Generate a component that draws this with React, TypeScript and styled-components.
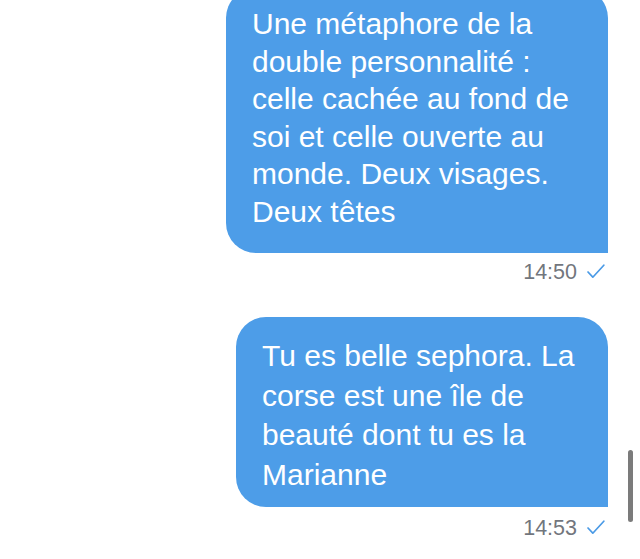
import * as React from 'react';
import styled, { createGlobalStyle } from 'styled-components';

const GlobalStyle = createGlobalStyle`
  html, body {
    margin: 0;
    padding: 0;
    background: #fff;
    overflow: hidden;
  }
  body {
    font-family: 'Liberation Sans', Arial, sans-serif;
  }
`;

const Screen = styled.div`
  position: relative;
  width: 640px;
  height: 559px;
  overflow: hidden;
  background: #fff;
`;

const Thread = styled.div`
  display: flex;
  flex-direction: column;
  align-items: flex-end;
  padding-right: 32px;
  margin-top: -12px;
`;

const Group = styled.div<{ $gap: number }>`
  display: flex;
  flex-direction: column;
  align-items: flex-end;
  margin-top: ${p => p.$gap}px;
`;

const Bubble = styled.div<{ $width: number; $leading: number; $padTop: number; $padBottom: number }>`
  box-sizing: border-box;
  width: ${p => p.$width}px;
  background: #4d9de8;
  color: #fff;
  font-size: 30px;
  line-height: ${p => p.$leading}px;
  padding: ${p => p.$padTop}px 20px ${p => p.$padBottom}px 26px;
  border-radius: 30px 30px 0 30px;
  white-space: nowrap;
`;

const Line = styled.span`
  display: block;
`;

const Meta = styled.div<{ $top: number }>`
  display: flex;
  align-items: center;
  gap: 10px;
  margin-top: ${p => p.$top}px;
  margin-right: 3px;
  height: 26px;
  font-size: 21.5px;
  line-height: 26px;
  color: #72767d;
`;

const Check = styled.svg`
  width: 18px;
  height: 15px;
  margin-top: -1px;
`;

const ScrollThumb = styled.div`
  position: absolute;
  top: 450px;
  right: 7px;
  width: 5px;
  height: 72px;
  border-radius: 3px;
  background: #7b7b7b;
`;

const messages = [
  {
    gap: 0,
    width: 382,
    leading: 37.5,
    padTop: 17,
    padBottom: 23,
    metaTop: 6,
    time: '14:50',
    lines: [
      'Une métaphore de la',
      'double personnalité :',
      'celle cachée au fond de',
      'soi et celle ouverte au',
      'monde. Deux visages.',
      'Deux têtes',
    ],
  },
  {
    gap: 32,
    width: 372,
    leading: 39.5,
    padTop: 19,
    padBottom: 13,
    metaTop: 8,
    time: '14:53',
    lines: [
      'Tu es belle sephora. La',
      'corse est une île de',
      'beauté dont tu es la',
      'Marianne',
    ],
  },
];

function ReadCheck() {
  return (
    <Check viewBox="0 0 18 15" fill="none">
      <path
        d="M1 8 L5.8 13.2 L16.8 1.2"
        stroke="#4a9ae6"
        strokeWidth="1.7"
        strokeLinecap="round"
        strokeLinejoin="round"
      />
    </Check>
  );
}

export default function App() {
  return (
    <Screen>
      <GlobalStyle />
      <Thread>
        {messages.map(m => (
          <Group key={m.time} $gap={m.gap}>
            <Bubble
              $width={m.width}
              $leading={m.leading}
              $padTop={m.padTop}
              $padBottom={m.padBottom}
            >
              {m.lines.map(l => (
                <Line key={l}>{l}</Line>
              ))}
            </Bubble>
            <Meta $top={m.metaTop}>
              {m.time}
              <ReadCheck />
            </Meta>
          </Group>
        ))}
      </Thread>
      <ScrollThumb />
    </Screen>
  );
}
